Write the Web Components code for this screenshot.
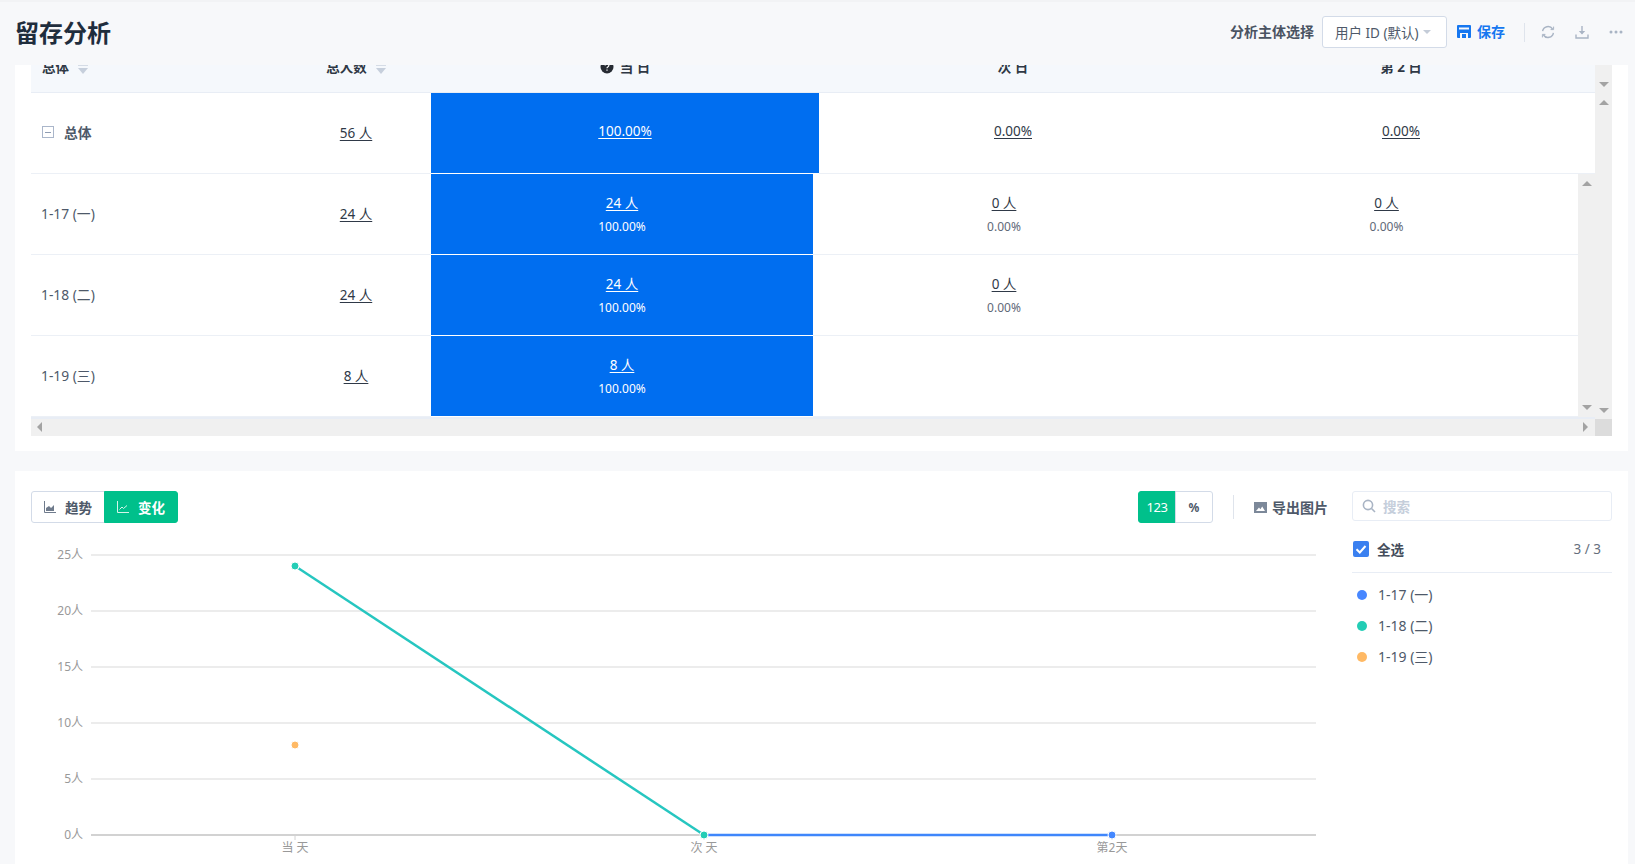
<!DOCTYPE html>
<html lang="zh">
<head>
<meta charset="utf-8">
<title>留存分析</title>
<style>
  html, body { margin: 0; height: 100%; }
  body {
    background: #f7f8fa;
    color: #4e5969;
    font-family: "Noto Sans", "Noto Sans CJK SC", sans-serif;
    height: 864px;
    overflow: hidden;
  }
  main { display: block; padding: 0 7px 0 15px; }
</style>
</head>
<body>
<page-header></page-header>
<main>
  <retention-table></retention-table>
  <chart-panel></chart-panel>
</main>

<script>
const FONT = `"Noto Sans", "Noto Sans CJK SC", sans-serif`

const sortIcon = `<svg width="10" height="12" viewBox="0 0 10 12"><path d="M0 0h10v3H0z" fill="#d5dce6"/><path d="M0 5h10l-5 6z" fill="#c6cfdc"/></svg>`

customElements.define('page-header', class extends HTMLElement {
  constructor() {
    super()
    this.attachShadow({ mode: 'open' }).innerHTML = `
      <style>
        :host {
          align-items: center;
          border-top: 2px solid #f2f3f5;
          box-sizing: border-box;
          display: flex;
          height: 65px;
          padding: 0 12px 3px 15px;
        }
        h1 {
          color: #1f2d3d;
          flex: 1;
          font-size: 24px;
          font-weight: 700;
          margin: 0 0 1px 0;
        }
        .label { color: #4a5362; font-size: 14px; font-weight: 700; margin: 0 8px 2px 0; }
        .select {
          align-items: center;
          background: #fff;
          border: 1px solid #d3dbe8;
          border-radius: 3px;
          box-sizing: border-box;
          color: #4e5969;
          display: flex;
          font-size: 13.5px;
          height: 32px;
          padding: 0 0 1px 12px;
          width: 125px;
        }
        .select i {
          border-left: 4px solid transparent;
          border-right: 4px solid transparent;
          border-top: 4px solid #c4ccd8;
          margin-left: 4px;
        }
        .save {
          align-items: center;
          color: #1677f0;
          display: flex;
          font-size: 14px;
          font-weight: 700;
          gap: 6px;
          margin: 0 0 2px 10px;
          width: 50px;
        }
        .sep { background: #dfe4ec; height: 19px; margin: 0 16px 0 17px; width: 1px; }
        .tools { align-items: center; display: flex; gap: 20px; }
        .tools svg { display: block; }
      </style>
      <h1>留存分析</h1>
      <span class="label">分析主体选择</span>
      <div class="select"><span>用户 ID (默认)</span><i></i></div>
      <div class="save">
        <svg width="14" height="14" viewBox="0 0 14 14"><path fill="#1677f0" fill-rule="evenodd" d="M1 1h12a1 1 0 0 1 1 1v11a1 1 0 0 1-1 1h-2V9H3v5H1a1 1 0 0 1-1-1V2a1 1 0 0 1 1-1zm1 2.5v2h10v-2zM5 10h4v4H5z"/></svg>
        <span>保存</span>
      </div>
      <div class="sep"></div>
      <div class="tools">
        <svg width="14" height="14" viewBox="0 0 14 14" fill="none" stroke="#a9b4c4" stroke-width="1.4"><path d="M1.6 6.2A5.5 5.5 0 0 1 11.6 4M12.4 7.8A5.5 5.5 0 0 1 2.4 10"/><path d="M12.6 1.6v3h-3M1.4 12.4v-3h3" stroke-width="1"/></svg>
        <svg width="14" height="14" viewBox="0 0 14 14" fill="none" stroke="#a9b4c4" stroke-width="1.4"><path d="M7 1v7.5"/><path d="M3.8 6h6.4L7 9.6z" fill="#a9b4c4" stroke="none"/><path d="M1 9.5V13h12V9.5"/></svg>
        <svg width="14" height="14" viewBox="0 0 14 14" fill="#a9b4c4"><circle cx="2" cy="7" r="1.5"/><circle cx="7" cy="7" r="1.5"/><circle cx="12" cy="7" r="1.5"/></svg>
      </div>
    `
  }
})

customElements.define('scroll-arrow', class extends HTMLElement {
  constructor() {
    super()
    const dir = this.getAttribute('dir')
    const paths = {
      up: 'M0 6 5 1l5 5z',
      down: 'M0 1h10L5 6z',
      left: 'M6 0v10L1 5z',
      right: 'M1 0v10l5-5z'
    }
    this.attachShadow({ mode: 'open' }).innerHTML = `
      <style>
        :host { display: block; line-height: 0; }
      </style>
      <svg width="${dir === 'left' || dir === 'right' ? 7 : 10}" height="${dir === 'left' || dir === 'right' ? 10 : 7}"><path d="${paths[dir]}" fill="#a3a3a3"/></svg>
    `
  }
})

// one value cell: underlined link, and an optional percentage under it
customElements.define('value-cell', class extends HTMLElement {
  constructor() {
    super()
    const sub = this.getAttribute('sub')
    this.attachShadow({ mode: 'open' }).innerHTML = `
      <style>
        :host {
          align-items: center;
          box-sizing: border-box;
          color: #2f3947;
          display: flex;
          flex-direction: column;
          font-size: 13.5px;
          justify-content: center;
        }
        :host([hot]) { background: #006ef0; color: #fff; }
        :host([lift]) { padding-bottom: 4px; }
        :host([sub]) { padding-top: 2px; }
        a { color: inherit; line-height: 22px; text-decoration: underline; text-underline-offset: 2px; }
        small { color: #5f6978; font-size: 12px; line-height: 22px; margin-top: 2px; }
        :host([hot]) small { color: #fff; }
      </style>
      <a><slot></slot></a>
      ${sub ? `<small>${sub}</small>` : ''}
    `
  }
})

customElements.define('table-row', class extends HTMLElement {
  constructor() {
    super()
    this.attachShadow({ mode: 'open' }).innerHTML = `
      <style>
        :host {
          border-bottom: 1px solid #ecf0f6;
          display: grid;
          grid-template-columns: 250px 150px 382px 382px 383px;
          height: 81px;
          box-sizing: border-box;
        }
        :host([total]) { grid-template-columns: 250px 150px 388px 388px 388px; width: 1564px; }
        ::slotted(.name) {
          align-items: center;
          color: #4e5969;
          display: flex;
          font-size: 13.8px;
          padding: 0 0 2px 10px;
        }
        ::slotted(value-cell[hot]) { box-shadow: 0 1px 0 #fff; }
      </style>
      <slot></slot>
    `
  }
})

customElements.define('retention-table', class extends HTMLElement {
  constructor() {
    super()
    this.attachShadow({ mode: 'open' }).innerHTML = `
      <style>
        :host {
          background: #fff;
          box-sizing: border-box;
          display: block;
          height: 386px;
          padding: 0 16px 16px;
        }
        .grid { display: grid; grid-template-columns: 1564px 17px; }
        .head {
          background: #f5f8fc;
          border-bottom: 1px solid #e8edf5;
          box-sizing: border-box;
          color: #2f3845;
          display: grid;
          font-size: 13.5px;
          font-weight: 700;
          grid-template-columns: 250px 150px 388px 388px 388px;
          height: 28px;
          overflow: hidden;
        }
        .head div {
          align-items: center;
          display: flex;
          gap: 9px;
          height: 14px;
          justify-content: center;
          line-height: 0;
          margin-top: -5px;
        }
        .head div:first-child { justify-content: flex-start; padding-left: 11px; }
        .head svg { flex: none; margin-top: 4px; }
        .head .mark { margin: 0 -3px 0 0; }
        .body { display: grid; grid-template-columns: 1547px 17px; }
        .bar {
          align-items: center;
          background: #f0f0f0;
          box-sizing: border-box;
          display: flex;
          flex-direction: column;
          justify-content: space-between;
        }
        .inner { padding: 6px 0; }
        .outer { justify-content: flex-start; padding-top: 16px; }
        .outer .up { margin-top: 11px; }
        .outer .last { margin-top: auto; }
        .h {
          align-items: center;
          background: #f0f0f0;
          border-top: 2px solid #e8edf5;
          box-sizing: border-box;
          display: flex;
          height: 19px;
          justify-content: space-between;
          padding: 0 6px 2px 5px;
        }
        .corner { background: #dcdcdc; height: 17px; margin-top: 5px; width: 17px; }
        .minus {
          align-items: center;
          border: 1px solid #aab6ca;
          box-sizing: border-box;
          display: inline-flex;
          height: 12px;
          justify-content: center;
          margin-right: 10px;
          width: 12px;
        }
        .minus::after { background: #8f9db3; content: ""; height: 1px; width: 6px; }
      </style>
      <div class="grid">
        <div>
          <div class="head">
            <div>总体 ${sortIcon}</div>
            <div>总人数 ${sortIcon}</div>
            <div><svg class="mark" width="14" height="14" viewBox="0 0 14 14"><circle cx="7" cy="7" r="6.5" fill="#262b33"/><path d="M5.2 5.4a1.8 1.8 0 1 1 2.6 1.6c-.6.3-.8.6-.8 1.2M7 9.6v1.2" stroke="#fff" stroke-width="1.2" fill="none"/></svg>当 日</div>
            <div>次 日</div>
            <div>第 2 日</div>
          </div>
          <table-row total>
            <div class="name" style="font-weight:700;padding-left:11px"><span class="minus"></span>总体</div>
            <value-cell>56 人</value-cell>
            <value-cell hot lift>100.00%</value-cell>
            <value-cell lift>0.00%</value-cell>
            <value-cell lift>0.00%</value-cell>
          </table-row>
          <div class="body">
            <div>
              <table-row>
                <div class="name">1-17 (一)</div>
                <value-cell>24 人</value-cell>
                <value-cell hot sub="100.00%">24 人</value-cell>
                <value-cell sub="0.00%">0 人</value-cell>
                <value-cell sub="0.00%">0 人</value-cell>
              </table-row>
              <table-row>
                <div class="name">1-18 (二)</div>
                <value-cell>24 人</value-cell>
                <value-cell hot sub="100.00%">24 人</value-cell>
                <value-cell sub="0.00%">0 人</value-cell>
                <div></div>
              </table-row>
              <table-row>
                <div class="name">1-19 (三)</div>
                <value-cell>8 人</value-cell>
                <value-cell hot sub="100.00%">8 人</value-cell>
                <div></div>
                <div></div>
              </table-row>
            </div>
            <div class="bar inner">
              <scroll-arrow dir="up"></scroll-arrow>
              <scroll-arrow dir="down"></scroll-arrow>
            </div>
          </div>
          <div class="h">
            <scroll-arrow dir="left"></scroll-arrow>
            <scroll-arrow dir="right"></scroll-arrow>
          </div>
        </div>
        <div class="bar outer">
          <scroll-arrow dir="down"></scroll-arrow>
          <scroll-arrow class="up" dir="up"></scroll-arrow>
          <scroll-arrow class="last" dir="down"></scroll-arrow>
          <div class="corner"></div>
        </div>
      </div>
    `
  }
})

customElements.define('seg-button', class extends HTMLElement {
  constructor() {
    super()
    this.attachShadow({ mode: 'open' }).innerHTML = `
      <style>
        :host {
          align-items: center;
          background: #fff;
          border: 1px solid #d3dbe8;
          box-sizing: border-box;
          color: #4e5969;
          display: flex;
          font-size: 13.5px;
          font-weight: 700;
          gap: 9px;
          height: 32px;
          justify-content: center;
        }
        :host([on]) { background: #00c08b; border-color: #00c08b; color: #fff; }
      </style>
      <slot></slot>
    `
  }
})

customElements.define('line-chart', class extends HTMLElement {
  constructor() {
    super()
    const ticks = [25, 20, 15, 10, 5, 0]
    const rows = ticks.map((t, i) => {
      const y = 555 + i * 56
      return `
        <line x1="91" x2="1316" y1="${y}" y2="${y}" stroke="${t ? '#ececec' : '#d2d2d2'}" stroke-width="2"/>
        <text x="83" y="${y + 4}" text-anchor="end">${t}人</text>`
    }).join('')
    const names = [[295, '当 天'], [704, '次 天'], [1112, '第2天']]
    const cats = names.map(([x, n]) => `
        <line x1="${x}" x2="${x}" y1="835" y2="840" stroke="#d2d2d2"/>
        <text x="${x}" y="852" text-anchor="middle">${n}</text>`).join('')
    this.attachShadow({ mode: 'open' }).innerHTML = `
      <style>
        :host { display: block; }
        svg { display: block; }
        text { fill: #999; font-family: ${FONT}; font-size: 12px; }
      </style>
      <svg width="1299" height="324" viewBox="31 540 1299 324">
        ${rows}${cats}
        <polyline points="704,835 1112,835" fill="none" stroke="#3f86fb" stroke-width="2.5"/>
        <polyline points="295,566 704,835" fill="none" stroke="#26c6c0" stroke-width="2.5"/>
        <circle cx="1112" cy="835" r="4" fill="#4488ff" stroke="#fff"/>
        <circle cx="704" cy="835" r="4" fill="#23cdb5" stroke="#fff"/>
        <circle cx="295" cy="566" r="4" fill="#23cdb5" stroke="#fff"/>
        <circle cx="295" cy="745" r="4" fill="#ffb964" stroke="#fff"/>
      </svg>
    `
  }
})

customElements.define('legend-list', class extends HTMLElement {
  constructor() {
    super()
    const items = [['1-17 (一)', '#4787ff'], ['1-18 (二)', '#23cdb5'], ['1-19 (三)', '#ffb964']]
    this.attachShadow({ mode: 'open' }).innerHTML = `
      <style>
        :host { display: block; color: #4e5969; font-size: 14px; }
        .search {
          align-items: center;
          border: 1px solid #e8edf5;
          border-radius: 3px;
          box-sizing: border-box;
          color: #c5cedb;
          display: flex;
          font-size: 13.5px;
          font-weight: 700;
          gap: 7px;
          height: 30px;
          padding-left: 9px;
        }
        .all {
          align-items: center;
          border-bottom: 1px solid #e8edf5;
          box-sizing: border-box;
          color: #444d5b;
          display: flex;
          font-size: 13.5px;
          font-weight: 700;
          height: 52px;
          padding: 5px 11px 0 0;
        }
        .all b { font-weight: inherit; flex: 1; margin-left: 8px; }
        .all span { color: #666f7d; font-weight: 400; }
        .check { background: #3a80f0; border-radius: 2px; display: block; flex: none; height: 16px; margin-left: 1px; width: 16px; }
        ul { list-style: none; margin: 5px 0 0; padding: 0; }
        li { align-items: center; display: flex; gap: 11px; height: 31px; padding-left: 5px; }
        li i { border-radius: 50%; height: 10px; margin-top: 2px; width: 10px; }
      </style>
      <div class="search">
        <svg width="14" height="14" viewBox="0 0 14 14" fill="none" stroke="#a9b4c4" stroke-width="1.6"><circle cx="6" cy="6" r="4.6"/><path d="M9.5 9.5 13 13"/></svg>
        <span>搜索</span>
      </div>
      <div class="all">
        <svg class="check" viewBox="0 0 16 16"><path d="M3.5 8.2 6.8 11.5 12.5 5" stroke="#fff" stroke-width="2" fill="none"/></svg>
        <b>全选</b><span>3 / 3</span>
      </div>
      <ul>
        ${items.map(([n, c]) => `<li><i style="background:${c}"></i>${n}</li>`).join('')}
      </ul>
    `
  }
})

customElements.define('chart-panel', class extends HTMLElement {
  constructor() {
    super()
    this.attachShadow({ mode: 'open' }).innerHTML = `
      <style>
        :host {
          background: #fff;
          box-sizing: border-box;
          display: grid;
          gap: 22px;
          grid-template-columns: 1299px 260px;
          height: 393px;
          margin-top: 20px;
          padding: 20px 16px 0;
        }
        .bar { align-items: center; display: flex; height: 32px; margin-bottom: 17px; }
        .seg { display: flex; }
        .seg seg-button:first-child { border-radius: 3px 0 0 3px; }
        .seg seg-button:last-child { border-radius: 0 3px 3px 0; margin-left: -1px; }
        .left seg-button { width: 74px; }
        .unit seg-button { font-size: 12px; gap: 0; width: 38px; }
        .unit seg-button[on] { font-size: 13px; font-weight: 400; letter-spacing: -.5px; }
        .grow { flex: 1; }
        .sep { background: #dfe4ec; height: 24px; margin: 0 20px; width: 1px; }
        .export {
          align-items: center;
          color: #4e5969;
          display: flex;
          font-size: 14px;
          font-weight: 700;
          gap: 5px;
          margin-right: 2px;
        }
      </style>
      <div>
        <div class="bar">
          <div class="seg left">
            <seg-button>
              <svg width="12" height="12" viewBox="0 0 12 12"><path d="M.5 0v11.5H12" fill="none" stroke="#6f7b8c"/><path d="M2 10V7l3-2 2 2 3-3v6z" fill="#6f7b8c"/></svg>
              趋势
            </seg-button>
            <seg-button on>
              <svg width="12" height="12" viewBox="0 0 12 12" fill="none" stroke="#d5f4ea"><path d="M.5 0v11.5H12"/><path d="M2.5 8.5l2.5-2.5 1.5 1.5L10 4.5"/></svg>
              变化
            </seg-button>
          </div>
          <div class="grow"></div>
          <div class="seg unit">
            <seg-button on>123</seg-button>
            <seg-button>%</seg-button>
          </div>
          <div class="sep"></div>
          <div class="export">
            <svg width="13" height="11" viewBox="0 0 13 11"><path fill="#7c8899" fill-rule="evenodd" d="M0 0h13v11H0zm2 9h9L8.2 4.6 6.4 7.2 5 5.6z"/></svg>
            <span>导出图片</span>
          </div>
        </div>
        <line-chart></line-chart>
      </div>
      <legend-list></legend-list>
    `
  }
})
</script>
</body>
</html>
